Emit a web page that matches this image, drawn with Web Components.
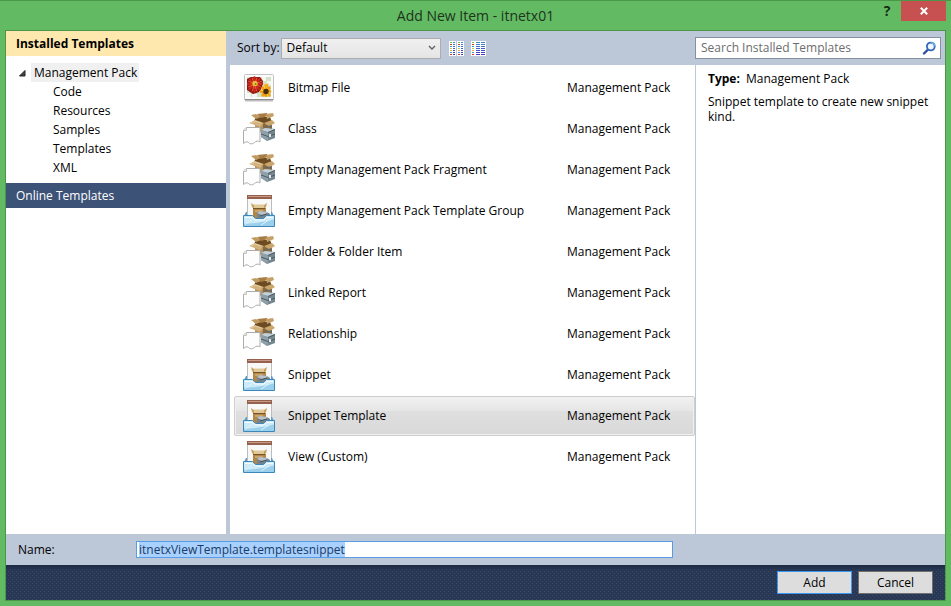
<!DOCTYPE html>
<html lang="en">
<head>
<meta charset="utf-8">
<title>Add New Item - itnetx01</title>
<style>
  html, body { height: 100%; margin: 0; }
  body {
    font: 12px/16px "Open Sans", "Noto Sans", sans-serif;
    color: #000;
    --steel: #bcc7d8;
    --line: #4c9649;
  }
</style>
</head>
<body>
<new-item-dialog heading="Add New Item - itnetx01">
  <category-panel slot="nav"></category-panel>
  <list-toolbar slot="toolbar"></list-toolbar>
  <search-box slot="search"></search-box>
  <template-list slot="list">
    <template-row icon="bitmap" kind="Management Pack">Bitmap File</template-row>
    <template-row icon="package" kind="Management Pack">Class</template-row>
    <template-row icon="package" kind="Management Pack">Empty Management Pack Fragment</template-row>
    <template-row icon="tray" kind="Management Pack">Empty Management Pack Template Group</template-row>
    <template-row icon="package" kind="Management Pack">Folder &amp; Folder Item</template-row>
    <template-row icon="package" kind="Management Pack">Linked Report</template-row>
    <template-row icon="package" kind="Management Pack">Relationship</template-row>
    <template-row icon="tray" kind="Management Pack">Snippet</template-row>
    <template-row icon="tray" kind="Management Pack" selected>Snippet Template</template-row>
    <template-row icon="tray" kind="Management Pack">View (Custom)</template-row>
  </template-list>
  <template-details slot="details" type="Management Pack">Snippet template to create new snippet kind.</template-details>
  <name-field slot="name" value="itnetxViewTemplate.templatesnippet"></name-field>
  <dialog-button slot="actions" default>Add</dialog-button>
  <dialog-button slot="actions">Cancel</dialog-button>
</new-item-dialog>

<script>
const RESET = `
  *, *::before { box-sizing: border-box; }
  button, input, select { font: inherit; color: inherit; margin: 0; padding: 0; border: 0; border-radius: 0; background: none; text-align: left; }
`;

class Base extends HTMLElement {
  render(css, html) {
    this.attachShadow({ mode: "open" }).innerHTML = `<style>${RESET}${css}</style>${html}`;
  }
}

customElements.define("new-item-dialog", class extends Base {
  connectedCallback() {
    this.render(`
      :host { display: flex; flex-direction: column; min-height: 100%; box-sizing: border-box;
        padding: 0 5px 5px; background: #62bb62; border-top: 1px solid var(--line); }
      header { display: grid; grid-template-columns: 1fr auto 1fr; height: 29px; }
      h1 { grid-column: 2; margin: 0; font-size: 14px; font-weight: 400; line-height: 30px; color: #1f3320; }
      .caption { display: flex; justify-content: flex-end; align-items: flex-start; }
      .help { width: 28px; height: 20px; font-weight: 700; font-size: 14px; line-height: 20px; text-align: center; color: #182c18; }
      .close { display: grid; place-items: center; width: 45px; height: 20px; background: #c75050; }
      .frame { flex: 1; display: flex; flex-direction: column; border: 1px solid var(--line); background: var(--steel); }
      .body { flex: 1; display: grid; grid-template-columns: 220px minmax(0, 469fr) minmax(0, 250fr);
        grid-template-rows: 34px 1fr; }
      slot[name=nav]::slotted(*) { grid-row: 1 / 3; }
      slot[name=toolbar]::slotted(*), slot[name=search]::slotted(*) { grid-row: 1; }
      slot[name=list]::slotted(*), slot[name=details]::slotted(*) { grid-row: 2; }
      slot[name=list]::slotted(*) { margin-left: 4px; }
      footer { display: flex; justify-content: flex-end; gap: 6px; padding: 6px 12px;
        background:
          linear-gradient(#1d2a42, #1d2a4200 6px),
          conic-gradient(from 270deg at 1px 1px, #35486a 90deg, #0000 0) 0 0 / 4px 4px,
          conic-gradient(from 270deg at 1px 1px, #35486a 90deg, #0000 0) 2px 2px / 4px 4px,
          #293955; }
    `, `
      <header>
        <h1>${this.getAttribute("heading")}</h1>
        <div class="caption">
          <button class="help" aria-label="Help">?</button>
          <button class="close" aria-label="Close"><svg width="8" height="8" viewBox="0 0 8 8"><path d="M.8.8l6.400 6.400M7.200.8L.8 7.200" stroke="#fff" stroke-width="2"/></svg></button>
        </div>
      </header>
      <div class="frame">
        <main class="body">
          <slot name="nav"></slot><slot name="toolbar"></slot><slot name="search"></slot>
          <slot name="list"></slot><slot name="details"></slot>
        </main>
        <slot name="name"></slot>
        <footer><slot name="actions"></slot></footer>
      </div>
    `);
  }
});

customElements.define("category-panel", class extends Base {
  connectedCallback() {
    const kids = ["Code", "Resources", "Samples", "Templates", "XML"];
    this.render(`
      :host { display: block; background: #fff; }
      button { display: block; }
      .head { width: 100%; height: 25px; padding: 0 10px; }
      .installed { background: #ffe8ae; font-weight: 700; }
      .online { background: #3d5277; color: #fff; }
      ul { list-style: none; margin: 0; padding: 0; }
      .tree { padding: 7px 0 6px 12px; }
      .root { display: flex; align-items: center; gap: 3px; }
      .root button { height: 19px; padding: 0 2px 0 3px; background: #f0f0f0; }
      .kids { padding-left: 35px; }
      .kids button { height: 19px; }
      svg { display: block; }
    `, `
      <button class="head installed">Installed Templates</button>
      <ul class="tree"><li>
        <div class="root"><svg width="10" height="8" viewBox="0 0 10 8"><path d="M7 1.500V7H1.500z" fill="#404040" stroke="#262626"/></svg><button>Management Pack</button></div>
        <ul class="kids">${kids.map(k => `<li><button>${k}</button></li>`).join("")}</ul>
      </li></ul>
      <button class="head online">Online Templates</button>
    `);
  }
});

function viewIcon(cols) {
  const dots = ["#7cc04a", "#d83a2a", "#4a90d8", "#c8d04a", "#e8b040", "#4a90d8", "#d83a2a"];
  const lines = ["#3f86c0", "#3f7fc8", "#4070cc", "#4360cc", "#4450c8", "#4444c0", "#4a3cb8"];
  let s = `<rect width="15" height="15" fill="#fff"/>`;
  for (let r = 0; r < 7; r++)
    for (const [x, w, dot] of cols)
      s += `<rect x="${x}" y="${r * 2 + 1}" width="${w}" height="1" fill="${(dot ? dots : lines)[r]}"/>`;
  return s;
}

customElements.define("list-toolbar", class extends Base {
  connectedCallback() {
    this.render(`
      :host { display: flex; align-items: center; padding: 0 11px; gap: 8px; }
      label { margin-right: -7px; }
      .combo { display: grid; align-items: center; }
      .combo > * { grid-area: 1 / 1; }
      select { appearance: none; width: 160px; height: 21px; padding: 0 5px; border: 1px solid #acacac;
        background: linear-gradient(#f0f0f0, #e5e5e5); }
      .combo svg { justify-self: end; margin-right: 5px; pointer-events: none; }
      .views { display: flex; gap: 7px; }
      .views button, .views svg { display: block; }
    `, `
      <label for="sort">Sort by:</label>
      <span class="combo">
        <select id="sort"><option>Default</option></select>
        <svg width="8" height="8" viewBox="0 0 8 8"><path d="M1 2l3 3 3-3" fill="none" stroke="#606060" stroke-width="1.400"/></svg>
      </span>
      <span class="views">
        <button aria-label="Small icons"><svg width="15" height="15">${viewIcon([[1,2,1],[4,2,0],[9,2,1],[12,2,0]])}<rect x="7" width="1" height="15" fill="#bcc7d8"/></svg></button>
        <button aria-label="Medium icons"><svg width="15" height="15">${viewIcon([[1,2,1],[5,4,0],[10,4,0]])}</svg></button>
      </span>
    `);
  }
});

customElements.define("search-box", class extends Base {
  connectedCallback() {
    this.render(`
      :host { display: flex; padding: 6px 4px 6px 0; }
      .box { flex: 1; display: flex; align-items: center; padding: 0 4px 0 5px; background: #fff; border: 1px solid #8591a2; }
      input { flex: 1; min-width: 0; outline: 0; }
      input::placeholder { color: #6d6d6d; opacity: 1; }
      button, svg { display: block; }
    `, `
      <div class="box">
        <input type="text" aria-label="Search Installed Templates" placeholder="Search Installed Templates">
        <button aria-label="Search"><svg width="14" height="14" viewBox="0 0 14 14">
          <path d="M2 12.500l3.500-3.500" stroke="#2a4f9c" stroke-width="2.400" stroke-linecap="round"/>
          <circle cx="8.800" cy="5.500" r="3.900" fill="#eef6ff" stroke="#3466b8" stroke-width="1.800"/>
          <path d="M8.800 1.600a3.900 3.900 0 0 1 3.900 3.900" fill="none" stroke="#62a8e4" stroke-width="1.800"/>
        </svg></button>
      </div>
    `);
  }
});

customElements.define("template-list", class extends Base {
  connectedCallback() {
    this.render(`
      :host { display: flex; flex-direction: column; gap: 1px; padding: 3px 0 3px 4px; background: #fff; }
    `, `<slot></slot>`);
  }
});

const ICONS = {
  bitmap: `
    <path d="M2 28.500h28" stroke="#bdbdbd" stroke-width="2"/>
    <rect x="1.500" y="2.500" width="29" height="25" rx="1" fill="#fbfbfb" stroke="#c2c2c2"/>
    <path d="M1.500 27.500h29" stroke="#8f8f8f"/>
    <rect x="4" y="5" width="24" height="20" fill="#d5e0c8"/>
    <path d="M19 5h4v4h-4zM24 9h4v4h-4zM4 21h4v4H4zM9 22h5v3H9z" fill="#f4f8f0"/>
    <path d="M4 7l4-2h9l3 4-1 6-3 5-6 2-6-4z" fill="#8e120e"/>
    <g stroke="#c9281c" stroke-width="2.400" stroke-linecap="round">
      <path d="M11.500 5.500v14M5 12h14M7 7.500l9.500 10M16.500 7l-10 10"/>
    </g>
    <g stroke="#ec5c38"><path d="M9 5.500l5 14M5 9l13 6M14 5.500l-5 14M5 15l14-6"/></g>
    <circle cx="12" cy="11.500" r="2.600" fill="#e8c838"/><circle cx="12.500" cy="12" r="1" fill="#8a7612"/>
    <g stroke="#f0a010" stroke-width="3.400" stroke-linecap="round"><path d="M23 14.500v9M18.500 19.500h8M20 16l6 7M26 16l-6 7"/></g>
    <path d="M21 12.500l2 5 3-6" fill="#f6ac18"/>
    <g stroke="#ffd040"><path d="M21 14l4 10M18 18l9 3"/></g>
    <circle cx="23" cy="19.500" r="2.700" fill="#4a2a10"/>`,
  package: `
    <path d="M12 8h17v10l-9 2-8-3z" fill="#8d6a3c"/>
    <path d="M12 9l8 3v8l-8-3z" fill="#b8935c"/>
    <path d="M11 8l2-4h14l2 5-9 2z" fill="#6d4b22"/>
    <path d="M8 2l5-1 5 3-5 2z" fill="#c09a60"/>
    <path d="M14 1l10-1 1 3-7 2z" fill="#a77d45"/>
    <path d="M23 1l7-1 1 3-7 3z" fill="#c5a068"/>
    <path d="M6 10l6-3 9 3-4 4z" fill="#d3b27d"/>
    <path d="M21 10l8-3 3 3-6 3.500z" fill="#caa66d"/>
    <path d="M8 10l4-2 6 2" stroke="#e7cfa5" fill="none"/>
    <path d="M18 17l3-2 11 1v9l-8 3-6-4z" fill="#74868f"/>
    <path d="M18 17l4-2 10 1-7 3z" fill="#c3cfd6"/>
    <path d="M18 17l7 2.500v8L18 24z" fill="#8fa0aa"/>
    <path d="M25 19.500l7-3M18 21l7 2.500 7-2.500" stroke="#4c5b65" fill="none"/>
    <path d="M22 15v-1.500l6-.5v2.500" stroke="#596872" fill="none"/>
    <path d="M26 21h2v3h-2z" fill="#e2e8eb"/>
    <path d="M.5 30.500V17l3-2.500H17v14.500c-2-1.500-4-1-5.500.5s-4 2-6 0c-2-1.500-3-.5-5 1z" fill="#fdfdfd" stroke="#adadad"/>
    <path d="M.5 17.500h3v-3" fill="#eee" stroke="#c4c4c4"/>`,
  tray: `
    <rect x="4.500" y=".5" width="24" height="28" fill="#f8f8f8" stroke="#bdbdbd"/>
    <path d="M4 0h25v4H4z" fill="#96604f"/><path d="M5 1h23v1H5z" fill="#c79a88"/>
    <path d="M1 21l2-4h1v5H1zM31 21l-2-4h-1v5h3z" fill="#5c9cc8"/>
    <path d="M10 13h13v10H10z" fill="#b28646"/>
    <path d="M8 8l3 2h10l3-2-1 4-2 2H11l-2-2z" fill="#c9a05c"/>
    <path d="M11 9.500h10v4H11z" fill="#e0c898"/><path d="M10 13.500h12" stroke="#775226"/>
    <path d="M12 16h8" stroke="#e0c290"/>
    <path d="M14 18l3-2 7 1 3 2v4l-6 3-7-3z" fill="#75838d"/>
    <path d="M14 18l3-2 7 1 1 1-6 2z" fill="#b9c3ca"/><path d="M17 21l7-2" stroke="#48555e"/>
    <path d="M.5 20.500h9l3 3h8l3-3h8v11H.5z" fill="#cdeaf8" stroke="#3c86ba"/>
    <path d="M2 22.500h7l3 2.500h9l3-2.500h6" fill="none" stroke="#f2fbff"/>
    <path d="M1 28.500c10 0 20-1 30-4v6.500H1z" fill="#9ad0ec"/>
    <path d="M2 29.500l7-5M18 30l8-5" stroke="#dff3fc"/>`
};

customElements.define("template-row", class extends Base {
  connectedCallback() {
    this.render(`
      :host { display: block; }
      button { display: grid; grid-template-columns: 32px minmax(0, 292fr) minmax(0, 127fr); align-items: center;
        width: 100%; height: 40px; padding: 0 0 0 8px; border: 1px solid transparent; border-radius: 2px; }
      :host([selected]) button { border-color: #cecece; background: linear-gradient(#f1f1f1, #e6e6e6 36%, #dfdfdf 38%, #d9d9d9);
        box-shadow: inset 0 0 0 1px #f0f0f0; }
      svg { display: block; }
      .name { padding-left: 13px; }
    `, `<button aria-pressed="${this.hasAttribute("selected")}">
        <svg width="32" height="32" viewBox="0 0 32 32" aria-hidden="true">${ICONS[this.getAttribute("icon")]}</svg>
        <span class="name"><slot></slot></span>
        <span>${this.getAttribute("kind")}</span>
      </button>`);
  }
});

customElements.define("template-details", class extends Base {
  connectedCallback() {
    this.render(`
      :host { display: block; padding: 6px 12px; background: #fff; border-left: 1px solid #bcc7d8; line-height: 15px; }
      p { margin: 0 0 8px; }
      b { margin-right: 3px; }
    `, `<p><b>Type:</b> ${this.getAttribute("type")}</p><p><slot></slot></p>`);
  }
});

customElements.define("name-field", class extends Base {
  connectedCallback() {
    this.render(`
      :host { display: grid; grid-template-columns: 118px minmax(0, 537fr) minmax(0, 272fr); align-items: center;
        height: 31px; padding-left: 12px; }
      input { height: 17px; padding: 0 2px; border: 1px solid #569de5; background: #fff; outline: 0; caret-color: transparent; }
      input::selection { background: #a8d1ff; color: #1a3b66; }
    `, `<label for="name">Name:</label><input id="name" type="text" value="${this.getAttribute("value")}">`);
    const input = this.shadowRoot.querySelector("input");
    input.focus();
    input.select();
  }
});

customElements.define("dialog-button", class extends Base {
  connectedCallback() {
    this.render(`
      :host { display: block; }
      button { display: block; min-width: 75px; height: 23px; text-align: center; background: #ddd; border: 1px solid #707070; }
      :host([default]) button { border-color: #3c97f0; }
    `, `<button><slot></slot></button>`);
  }
});
</script>
</body>
</html>
